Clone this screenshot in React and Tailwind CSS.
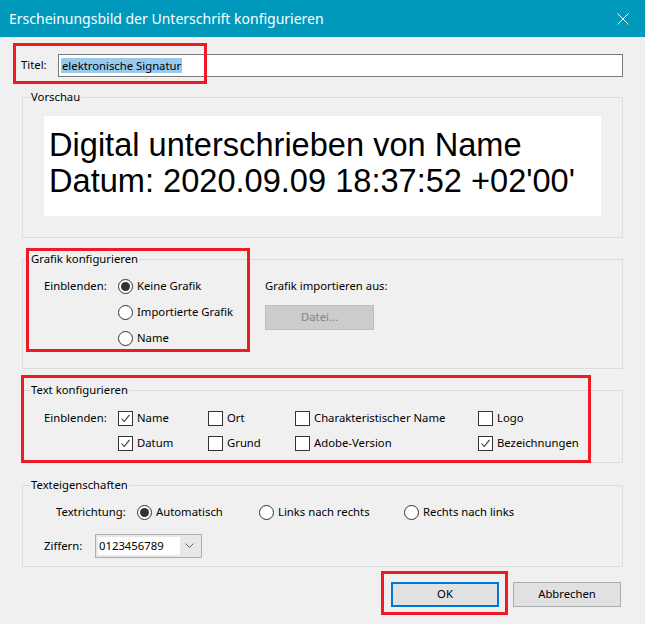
import React from 'react';

const Radio = ({ checked, label }) => (
  <div className="flex items-center gap-[4px]">
    <span className="w-[15px] h-[15px] rounded-full border border-[#333333] bg-white flex items-center justify-center shrink-0">
      {checked && <span className="w-[9px] h-[9px] rounded-full bg-[#333333]" />}
    </span>
    <span>{label}</span>
  </div>
);

const Check = ({ checked, label }) => (
  <div className="flex items-center gap-[4px]">
    <span className="w-[15px] h-[15px] border border-[#333333] bg-white flex items-center justify-center shrink-0">
      {checked && (
        <svg width="11" height="11" viewBox="0 0 11 11">
          <path d="M1.5 5.5 L4.2 8.5 L9.5 1.8" fill="none" stroke="#333333" strokeWidth="1.1" />
        </svg>
      )}
    </span>
    <span>{label}</span>
  </div>
);

const Group = ({ title, className = '', children }) => (
  <fieldset className={`border border-[#dcdcdc] ${className}`}>
    <legend className="ml-[7px] px-[1px] leading-[16px]">{title}</legend>
    {children}
  </fieldset>
);

export default function App() {
  return (
    <div className="relative w-[645px] h-[624px] overflow-hidden bg-[#f0f0f0] text-[11.3px] text-black font-['Noto_Sans',sans-serif]">
      {/* Titelleiste */}
      <div className="h-[37px] bg-[#0099bc] flex items-center justify-between pl-[9px] pr-[16px] text-white">
        <span className="text-[14px]">Erscheinungsbild der Unterschrift konfigurieren</span>
        <svg width="12" height="12" viewBox="0 0 12 12">
          <path d="M0.5 0.5 L11.5 11.5 M11.5 0.5 L0.5 11.5" stroke="#ffffff" strokeWidth="1" />
        </svg>
      </div>

      <div className="px-[22px]">
        {/* Titel */}
        <div className="mt-[17px] flex items-center h-[23px]">
          <span className="w-[37px] -ml-[1px]">Titel:</span>
          <div className="flex-1 h-[23px] bg-white border border-[#7a7a7a] flex items-center px-[2px]">
            <span className="bg-[#99c9ef] leading-[15px] px-[1px]">elektronische Signatur</span>
          </div>
        </div>

        {/* Vorschau */}
        <Group title="Vorschau" className="mt-[12px] pt-[11px] pb-[21px]">
          <div className="mx-[21px] h-[100px] bg-white pt-[11px] pl-[5px] font-['Liberation_Sans',Arial,sans-serif] text-[32.6px] leading-[36px] whitespace-nowrap">
            <div>Digital unterschrieben von Name</div>
            <div>Datum: 2020.09.09 18:37:52 +02'00'</div>
          </div>
        </Group>

        {/* Grafik konfigurieren */}
        <Group title="Grafik konfigurieren" className="mt-[13px] pt-[6px] pb-[17px]">
          <div className="flex pl-[21px]">
            <div className="w-[74px] h-[26px] flex items-center">Einblenden:</div>
            <div className="w-[147px] flex flex-col">
              <div className="h-[26px] flex items-center"><Radio checked label="Keine Grafik" /></div>
              <div className="h-[26px] flex items-center"><Radio label="Importierte Grafik" /></div>
              <div className="h-[26px] flex items-center"><Radio label="Name" /></div>
            </div>
            <div className="flex flex-col">
              <div className="h-[26px] flex items-center">Grafik importieren aus:</div>
              <button className="mt-[6px] w-[109px] h-[25px] bg-[#cccccc] border border-[#bfbfbf] text-[#838383]">Datei...</button>
            </div>
          </div>
        </Group>

        {/* Text konfigurieren */}
        <Group title="Text konfigurieren" className="mt-[13px] pt-[8px] pb-[6px]">
          <div className="grid grid-cols-[74px_90px_87px_183px_1fr] pl-[21px]">
            <div className="h-[25px] flex items-center">Einblenden:</div>
            <div className="h-[25px] flex items-center"><Check checked label="Name" /></div>
            <div className="h-[25px] flex items-center"><Check label="Ort" /></div>
            <div className="h-[25px] flex items-center"><Check label="Charakteristischer Name" /></div>
            <div className="h-[25px] flex items-center"><Check label="Logo" /></div>
            <div className="h-[25px]" />
            <div className="h-[25px] flex items-center"><Check checked label="Datum" /></div>
            <div className="h-[25px] flex items-center"><Check label="Grund" /></div>
            <div className="h-[25px] flex items-center"><Check label="Adobe-Version" /></div>
            <div className="h-[25px] flex items-center"><Check checked label="Bezeichnungen" /></div>
          </div>
        </Group>

        {/* Texteigenschaften */}
        <Group title="Texteigenschaften" className="mt-[14px] pt-[6px] pb-[8px]">
          <div className="flex h-[26px] items-center pl-[33px]">
            <span className="w-[81px]">Textrichtung:</span>
            <div className="w-[122px]"><Radio checked label="Automatisch" /></div>
            <div className="w-[145px]"><Radio label="Links nach rechts" /></div>
            <Radio label="Rechts nach links" />
          </div>
          <div className="flex items-center mt-[9px] pl-[21px]">
            <span className="w-[51px]">Ziffern:</span>
            <div className="w-[107px] h-[24px] border border-[#adadad] bg-[#e8e8e8] flex items-center p-[2px]">
              <div className="w-[82px] h-full bg-white flex items-center pl-[1px]">0123456789</div>
              <div className="flex-1 flex items-center justify-center">
                <svg width="9" height="6" viewBox="0 0 9 6">
                  <path d="M0.5 0.5 L4.5 4.5 L8.5 0.5" fill="none" stroke="#606060" strokeWidth="1" />
                </svg>
              </div>
            </div>
          </div>
        </Group>

        {/* Buttons */}
        <div className="mt-[15px] flex justify-end gap-[14px] pr-[2px]">
          <button className="w-[108px] h-[25px] bg-[#e1e1e1] border-2 border-[#0078d7]">OK</button>
          <button className="w-[108px] h-[25px] bg-[#e1e1e1] border border-[#adadad]">Abbrechen</button>
        </div>
      </div>

      {/* Rote Markierungen */}
      <div className="absolute left-[13px] top-[43px] w-[194px] h-[41px] border-[3px] border-[#ed1c24] pointer-events-none" />
      <div className="absolute left-[26px] top-[248px] w-[224px] h-[104px] border-[3px] border-[#ed1c24] pointer-events-none" />
      <div className="absolute left-[21px] top-[375px] w-[570px] h-[88px] border-[3px] border-[#ed1c24] pointer-events-none" />
      <div className="absolute left-[381px] top-[571px] w-[127px] h-[44px] border-[3px] border-[#ed1c24] pointer-events-none" />
    </div>
  );
}
